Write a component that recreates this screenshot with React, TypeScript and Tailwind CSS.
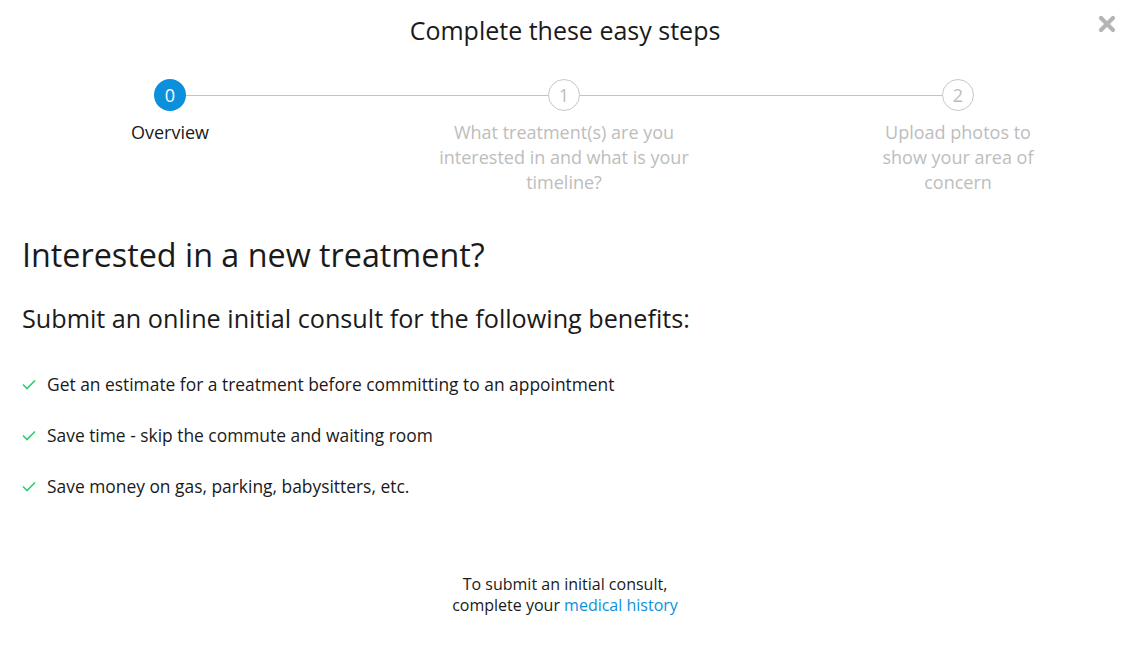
const steps = [
  { n: "0", label: "Overview", width: "w-[200px]" },
  { n: "1", label: "What treatment(s) are you interested in and what is your timeline?", width: "w-[262px]" },
  { n: "2", label: "Upload photos to show your area of concern", width: "w-[170px]" },
];

const benefits = [
  "Get an estimate for a treatment before committing to an appointment",
  "Save time - skip the commute and waiting room",
  "Save money on gas, parking, babysitters, etc.",
];

function Check() {
  return (
    <svg width="14" height="11" viewBox="0 0 14 11" className="shrink-0">
      <polyline points="1,5.5 5,9.5 13,1.5" fill="none" stroke="#2ecc71" strokeWidth="1.6" />
    </svg>
  );
}

function StepCircle({ n, active }: { n: string; active: boolean }) {
  return (
    <div
      className={
        active
          ? "flex h-8 w-8 shrink-0 items-center justify-center rounded-full bg-[#0c90dc] text-[18px] text-white"
          : "flex h-8 w-8 shrink-0 items-center justify-center rounded-full border border-[#c8c8c8] bg-white text-[18px] text-[#bdbdbd]"
      }
    >
      {n}
    </div>
  );
}

export default function App() {
  return (
    <div className="relative h-[651px] w-full bg-white font-['Open_Sans',sans-serif] text-[#1a1a1a]">
      <button
        type="button"
        className="absolute right-[14px] top-[15px] text-[#b4b4b4]"
        aria-label="Close"
      >
        <svg width="18" height="18" viewBox="0 0 18 18">
          <path d="M3 3 L15 15 M15 3 L3 15" stroke="currentColor" strokeWidth="4.2" strokeLinecap="round" />
        </svg>
      </button>

      <h1 className="pt-[14px] text-center text-[25px] leading-8">Complete these easy steps</h1>

      {/* stepper */}
      <div className="ml-[154px] mt-[33px] flex w-[820px] items-center">
        <StepCircle n="0" active />
        <div className="h-px flex-1 bg-[#c4c4c4]" />
        <StepCircle n="1" active={false} />
        <div className="h-px flex-1 bg-[#c4c4c4]" />
        <StepCircle n="2" active={false} />
      </div>
      <div className="ml-[154px] mt-[9px] flex w-[820px] justify-between">
        {steps.map((s, i) => (
          <div key={s.n} className="flex w-8 justify-center">
            <p
              className={
                "shrink-0 text-center text-[18px] leading-[25px] " +
                s.width +
                (i === 0 ? " text-[#1a1a1a]" : " text-[#bdbdbd]")
              }
            >
              {s.label}
            </p>
          </div>
        ))}
      </div>

      <div className="px-[22px]">
        <h2 className="mt-[39px] text-[32.3px] leading-10">Interested in a new treatment?</h2>
        <h3 className="mt-[28px] text-[25.2px] leading-8">
          Submit an online initial consult for the following benefits:
        </h3>
        <ul className="mt-[38px] flex flex-col gap-[27px]">
          {benefits.map((b) => (
            <li key={b} className="flex items-center gap-[11px] text-[17.4px] leading-6">
              <Check />
              <span>{b}</span>
            </li>
          ))}
        </ul>
      </div>

      <p className="mt-[76px] text-center text-[16px] leading-[21px]">
        To submit an initial consult,
        <br />
        complete your <a className="text-[#0c90dc]">medical history</a>
      </p>
    </div>
  );
}
